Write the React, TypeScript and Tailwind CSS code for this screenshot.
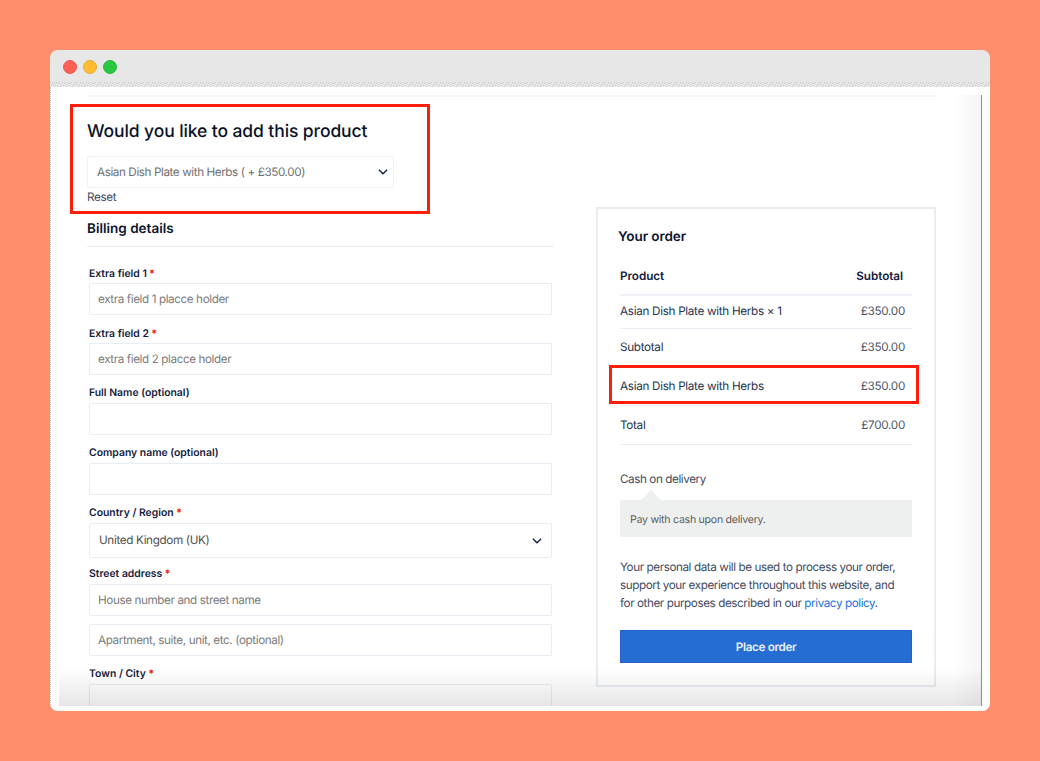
import React from "react";

function Chevron({ className }: { className?: string }) {
  return (
    <svg viewBox="0 0 10 6" className={className} fill="none" stroke="#10203f" strokeWidth="1.3">
      <path d="M0.9 0.8 L5 4.8 L9.1 0.8" />
    </svg>
  );
}

function Label({ text, required }: { text: string; required?: boolean }) {
  return (
    <div className="flex h-4 items-center pt-px text-[10.4px] leading-4 font-semibold whitespace-pre text-[#14203c]">
      {text}
      {required && <span className="font-extrabold text-[#f5140a]"> *</span>}
    </div>
  );
}

function Field({ text, className }: { text?: string; className: string }) {
  return (
    <div className={`flex items-center rounded-[1px] border border-[#e9eef4] px-2 pt-[2px] text-[11.7px] tracking-[-0.4px] text-[#7b7b7b] ${className}`}>
      {text}
    </div>
  );
}

function Row({ name, price, className }: { name: string; price: string; className: string }) {
  return (
    <div className={`flex items-center justify-between border-b border-[#e9eef4] ${className}`}>
      <span>{name}</span>
      <span className="pr-[7px] text-[#4b5568]">{price}</span>
    </div>
  );
}

function Upsell() {
  return (
    <div className="ml-[11px] flex h-[110px] w-[360px] flex-col border-3 border-[#fb1e0a] pl-[14px]">
      <h2 className="mt-[13px] h-6 text-[17.5px] leading-6 font-medium tracking-[-0.1px] whitespace-nowrap text-[#0b1226]">
        Would you like to add this product
      </h2>
      <div className="mt-[12px] flex h-8 w-[307px] items-center justify-between rounded-[2px] border border-[#edf1f6] pr-[5px] pl-[9px] text-[11.7px] tracking-[-0.41px] text-[#6f6f6f]">
        <span className="pt-[2px]">Asian Dish Plate with Herbs ( + £350.00)</span>
        <Chevron className="h-[6px] w-[10px]" />
      </div>
      <div className="mt-px h-4 text-[11.7px] leading-4 tracking-[-0.35px] text-[#3f4b61]">Reset</div>
    </div>
  );
}

function Billing() {
  return (
    <div className="ml-[28px] w-[467px]">
      <h3 className="mt-[6px] h-[27px] border-b border-[#e9eef4] text-[13.5px] leading-[18px] font-semibold text-[#0d152b]">
        Billing details
      </h3>
      <div className="ml-[2px] flex w-[463px] flex-col pt-[18px]">
        <Label text="Extra field 1" required />
        <Field className="mt-[2px] h-8" text="extra field 1 placce holder" />
        <div className="h-[10px]" />
        <Label text="Extra field 2" required />
        <Field className="mt-[2px] h-8" text="extra field 2 placce holder" />
        <div className="h-[9px]" />
        <Label text="Full Name (optional)" />
        <Field className="mt-[3px] h-8" />
        <div className="h-[9px]" />
        <Label text="Company name (optional)" />
        <Field className="mt-[3px] h-8" />
        <div className="h-[9px]" />
        <Label text="Country / Region" required />
        <div className="mt-[3px] flex h-[35px] items-center justify-between rounded-[2px] border border-[#e9eef4] pr-[9px] pl-[9px] text-[11.7px] tracking-[-0.35px] text-[#505050]">
          <span className="pt-px">United Kingdom (UK)</span>
          <Chevron className="h-[6px] w-[10px]" />
        </div>
        <div className="h-[7px]" />
        <Label text="Street address" required />
        <Field className="mt-[3px] h-8" text="House number and street name" />
        <Field className="mt-[8px] h-8" text="Apartment, suite, unit, etc. (optional)" />
        <div className="h-[9px]" />
        <Label text="Town / City" required />
        <Field className="mt-[3px] h-8" />
      </div>
    </div>
  );
}

function Order() {
  return (
    <div className="relative mt-[110px] h-[480px] w-[340px] border-2 border-[#e8edf2] pl-[22px] text-[11.7px] tracking-[-0.42px] text-[#27344d]">
      <h3 className="mt-[19px] -ml-[2px] h-[18px] text-[13.5px] leading-[18px] font-semibold tracking-[-0.05px] text-[#0d152b]">
        Your order
      </h3>
      <div className="w-[292px]">
        <div className="mt-[11px] flex h-[39px] items-center justify-between border-b-2 border-[#eff3f7] pt-[2px] font-semibold tracking-[-0.05px] text-[#14203c]">
          <span>Product</span>
          <span className="pr-[9px]">Subtotal</span>
        </div>
        <div className="tracking-[-0.3px]">
          <Row className="h-[33px]" name="Asian Dish Plate with Herbs × 1" price="£350.00" />
          <Row className="h-[37px] pt-[2px]" name="Subtotal" price="£350.00" />
          <Row className="h-[40px] pt-[2px]" name="Asian Dish Plate with Herbs" price="£350.00" />
          <Row className="h-[39px] pt-px" name="Total" price="£700.00" />
        </div>
        <div className="mt-[26px] h-4 leading-4 text-[#3f4b61]">Cash on delivery</div>
        <svg className="mt-[3px] ml-[21px] h-[10px] w-[20px]" viewBox="0 0 20 10">
          <path d="M0 10 L10 0 L20 10 Z" fill="#eef0f0" />
        </svg>
        <div className="flex h-[37px] items-center rounded-[1px] bg-[#eef0f0] pt-[2px] pl-[10px] text-[10.6px] tracking-[-0.27px] text-[#5c5c5c]">
          Pay with cash upon delivery.
        </div>
        <p className="mt-[21px] leading-[18px] whitespace-nowrap text-[#3f4b61]">
          Your personal data will be used to process your order,
          <br />
          support your experience throughout this website, and
          <br />
          for other purposes described in our <span className="text-[#2273dc]">privacy policy</span>.
        </p>
        <div className="mt-[18px] flex h-[33px] items-center justify-center border border-[#2461cf] bg-[#256cd3] pt-[2px] font-semibold tracking-[-0.35px] text-[#e9f1fc]">
          Place order
        </div>
      </div>
      <div className="absolute top-[156px] left-[11px] h-[39px] w-[310px] border-3 border-[#fb1e0a]" />
    </div>
  );
}

export default function App() {
  return (
    <div className="h-[761px] w-[1040px] bg-[#ff8e6c] p-[50px] font-['Inter',sans-serif] [text-rendering:geometricPrecision]">
      <div className="flex h-[661px] w-[940px] flex-col overflow-hidden rounded-[8px] bg-[#e7e7e7]">
        <div className="flex h-8 shrink-0 items-center gap-[6px] pt-[2px] pl-[13px]">
          <span className="h-[14px] w-[14px] rounded-full border border-[#ec5950] bg-[#ff5f57]" />
          <span className="h-[14px] w-[14px] rounded-full border border-[#e9ac35] bg-[#febc2e]" />
          <span className="h-[14px] w-[14px] rounded-full border border-[#25b83c] bg-[#28c840]" />
        </div>
        <svg className="block h-[5px] w-[940px] shrink-0">
          <defs>
            <pattern id="grain" width="12" height="5" patternUnits="userSpaceOnUse">
              <rect width="12" height="5" fill="#e3e3e3" />
              <path d="M0 0h1v1h-1zM3 0h1v1h-1zM6 0h1v1h-1zM9 0h1v1h-1zM2 1h1v1h-1zM5 2h1v1h-1zM8 1h1v1h-1zM11 2h1v1h-1zM1 3h1v1h-1zM4 4h1v1h-1zM7 3h1v1h-1zM10 4h1v1h-1z" fill="#cdcdcd" />
              <path d="M1 1h1v1h-1zM4 1h1v1h-1zM7 2h1v1h-1zM10 1h1v1h-1zM2 4h1v1h-1zM6 4h1v1h-1zM9 3h1v1h-1zM0 4h1v1h-1z" fill="#f3f3f3" />
            </pattern>
          </defs>
          <rect width="940" height="5" fill="url(#grain)" />
        </svg>
        <div className="flex-1 border-l border-dotted border-[#bdbdbd] bg-white pt-[8px] pl-[8px]">
          <div className="relative h-[611px] w-[923px] overflow-hidden border-r border-[#8f8f8f]">
            <div className="ml-[28px] h-[2px] w-[849px] bg-[#f5f6f7]" />
            <div className="flex">
              <div className="w-[537px] pt-[7px]">
                <Upsell />
                <Billing />
              </div>
              <Order />
            </div>
            <div className="absolute inset-y-0 right-0 w-[28px] bg-linear-to-r from-black/0 to-black/4" />
            <div className="absolute inset-x-0 bottom-0 h-[38px] bg-linear-to-b from-black/0 to-black/10" />
          </div>
        </div>
      </div>
    </div>
  );
}
